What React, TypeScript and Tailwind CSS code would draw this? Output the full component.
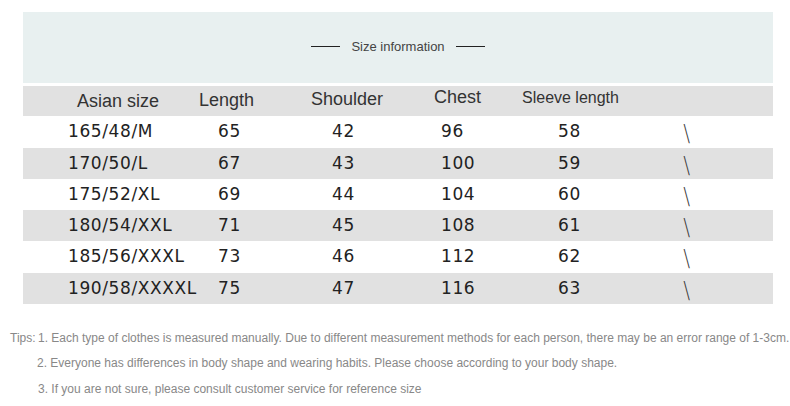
const rows = [
  { size: "165/48/M", length: "65", shoulder: "42", chest: "96", sleeve: "58", h: "h-[32px]", bg: "bg-white" },
  { size: "170/50/L", length: "67", shoulder: "43", chest: "100", sleeve: "59", h: "h-[31px]", bg: "bg-[#e1e1e1]" },
  { size: "175/52/XL", length: "69", shoulder: "44", chest: "104", sleeve: "60", h: "h-[31px]", bg: "bg-white" },
  { size: "180/54/XXL", length: "71", shoulder: "45", chest: "108", sleeve: "61", h: "h-[31px]", bg: "bg-[#e1e1e1]" },
  { size: "185/56/XXXL", length: "73", shoulder: "46", chest: "112", sleeve: "62", h: "h-[32px]", bg: "bg-white" },
  { size: "190/58/XXXXL", length: "75", shoulder: "47", chest: "116", sleeve: "63", h: "h-[31px]", bg: "bg-[#e1e1e1]" },
];

export default function App() {
  return (
    <div className="w-[790px] h-[406px] bg-white overflow-hidden font-['Liberation_Sans',Arial,sans-serif]">
      <div className="ml-[23px] mt-[12px] w-[750px]">
        {/* title band */}
        <div className="h-[71px] bg-[#e8f0f0] flex items-center justify-center gap-[11px] pb-[2px]">
          <div className="w-[29px] h-px bg-[#222]" />
          <span className="text-[13px] text-[#444]">Size information</span>
          <div className="w-[29px] h-px bg-[#222]" />
        </div>

        {/* header */}
        <div className="mt-[3px] h-[30px] bg-[#e1e1e1] flex items-start pl-[54px] text-[#333]">
          <div className="w-[122px] pt-[6px] text-[18px] leading-[18px]">Asian size</div>
          <div className="w-[112px] pt-[5px] text-[18px] leading-[18px]">Length</div>
          <div className="w-[123px] pt-[4px] text-[18px] leading-[18px]">Shoulder</div>
          <div className="w-[88px] pt-[2px] text-[18px] leading-[18px]">Chest</div>
          <div className="pt-[4px] text-[16px] leading-[16px]">Sleeve length</div>
        </div>

        {/* body */}
        {rows.map((r) => (
          <div
            key={r.size}
            className={`${r.h} ${r.bg} flex items-center pl-[45px] text-[17px] tracking-[0.6px] text-[#222] font-['DejaVu_Sans',Verdana,sans-serif]`}
          >
            <div className="w-[150px]">{r.size}</div>
            <div className="w-[114px]">{r.length}</div>
            <div className="w-[109px]">{r.shoulder}</div>
            <div className="w-[117px]">{r.chest}</div>
            <div className="w-[125px]">{r.sleeve}</div>
            <div className="font-['Inter',sans-serif] font-extralight text-[22px] leading-[22px] text-[#333] pt-[2px]">\</div>
          </div>
        ))}
      </div>

      {/* tips */}
      <div className="mt-[28px] text-[12px] text-[#888] leading-[13px]">
        <div className="flex pl-[10px]">
          <span className="w-[28px]">Tips:</span>
          <span>1. Each type of clothes is measured manually. Due to different measurement methods for each person, there may be an error range of 1-3cm.</span>
        </div>
        <div className="pl-[37px] mt-[12px]">2. Everyone has differences in body shape and wearing habits. Please choose according to your body shape.</div>
        <div className="pl-[38px] mt-[13px]">3. If you are not sure, please consult customer service for reference size</div>
      </div>
    </div>
  );
}
